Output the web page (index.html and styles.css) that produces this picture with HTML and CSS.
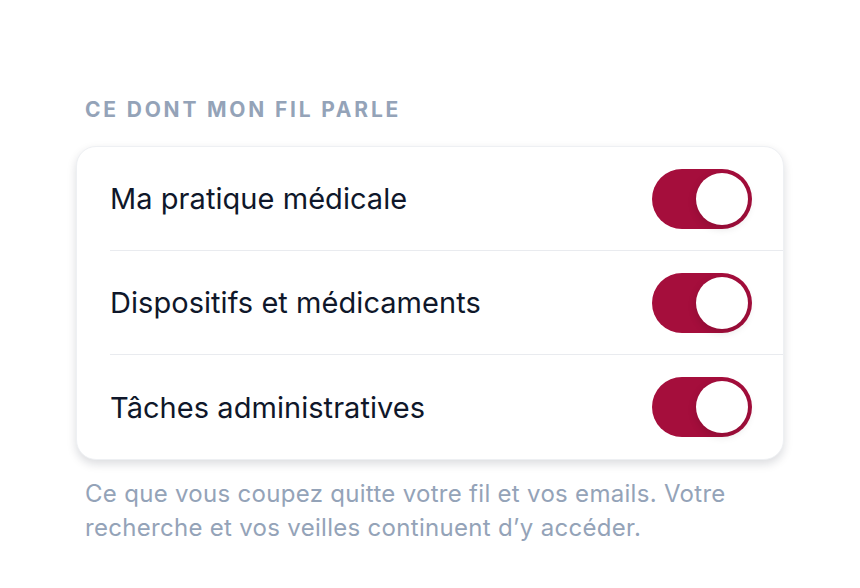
FILE: index.html
```
<!DOCTYPE html>
<html lang="fr">
<head>
    <meta charset="UTF-8">
    <meta name="viewport" content="width=device-width, initial-scale=1.0">
    <title>Préférences du fil</title>
    <link rel="stylesheet" href="styles.css">
</head>
<body>
    <div class="page-cont">
        <div class="section-title">Ce dont mon fil parle</div>

        <div class="topics-card">
            <div class="topic-row">
                <div class="topic-label">Ma pratique médicale</div>
                <div class="toggle on"><div class="toggle-knob"></div></div>
            </div>
            <div class="topic-row">
                <div class="topic-label">Dispositifs et médicaments</div>
                <div class="toggle on"><div class="toggle-knob"></div></div>
            </div>
            <div class="topic-row">
                <div class="topic-label">Tâches administratives</div>
                <div class="toggle on"><div class="toggle-knob"></div></div>
            </div>
        </div>

        <p class="help-text">Ce que vous coupez quitte votre fil et vos emails. Votre recherche et vos veilles continuent d’y accéder.</p>
    </div>
</body>
</html>
```

FILE: styles.css
```
* {
    box-sizing: border-box;
}

body {
    margin: 0;
    padding: 0;
    background-color: #ffffff;
    font-family: Inter, "Noto Sans", sans-serif;
}

.page-cont {
    width: 708px;
    margin: 0 auto;
    padding-top: 96px;
}

.section-title {
    padding-left: 9px;
    font-size: 21px;
    font-weight: 700;
    letter-spacing: 2.8px;
    text-transform: uppercase;
    color: #94a3b8;
    line-height: 28px;
}

.topics-card {
    margin-top: 22px;
    background-color: #ffffff;
    border: 1px solid #eef0f3;
    border-radius: 20px;
    box-shadow: 0 4px 10px rgba(15, 23, 42, 0.15);
    padding-left: 33px;
}

.topic-row {
    height: 104px;
    display: flex;
    align-items: center;
    justify-content: space-between;
    padding-right: 31px;
    border-bottom: 1px solid #e9ebef;
}

.topic-row:last-child {
    border-bottom: none;
}

.topic-label {
    font-size: 29px;
    color: #0f172a;
    letter-spacing: 0.05px;
}

.toggle {
    width: 100px;
    height: 60px;
    border-radius: 30px;
    background-color: #e2e8f0;
    display: flex;
    align-items: center;
    padding: 4px;
}

.toggle.on {
    background-color: #a50e3c;
    justify-content: flex-end;
}

.toggle-knob {
    width: 52px;
    height: 52px;
    border-radius: 50%;
    background-color: #ffffff;
    box-shadow: 0 3px 8px rgba(0, 0, 0, 0.15);
}

.help-text {
    margin: 17px 0 0 0;
    padding-left: 9px;
    font-size: 24px;
    line-height: 34px;
    letter-spacing: 0.3px;
    color: #94a3b8;
}
```
